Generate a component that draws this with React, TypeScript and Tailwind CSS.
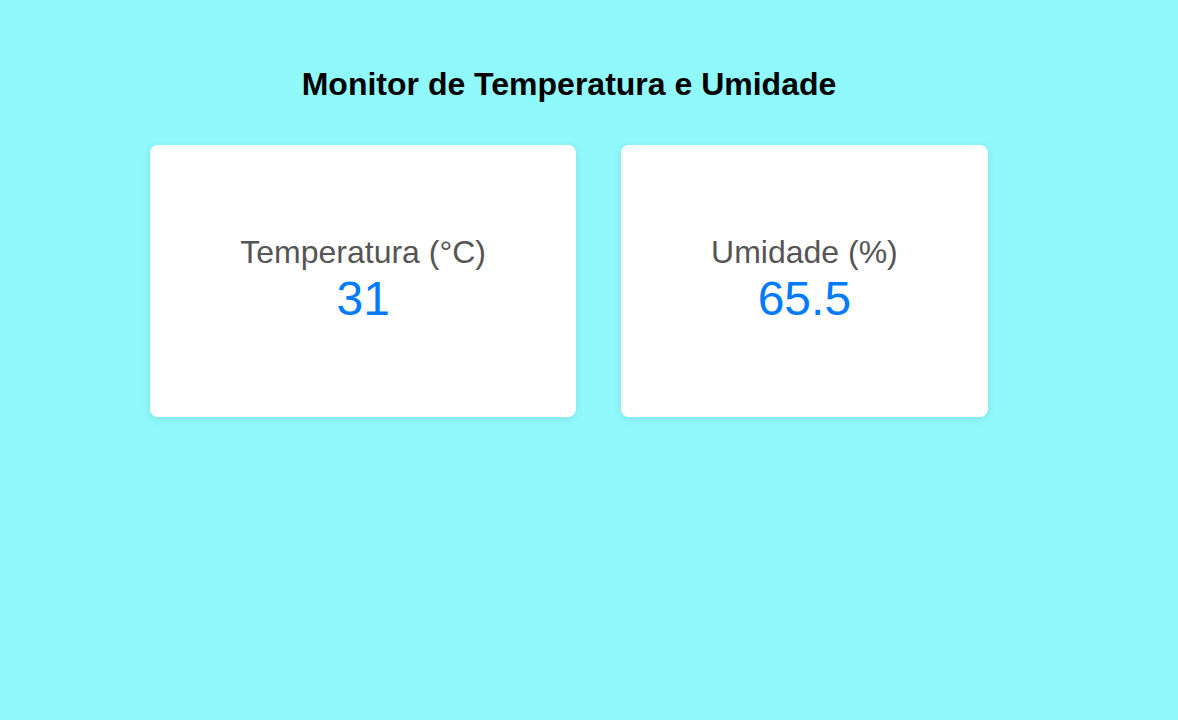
const Card = ({ label, value }: { label: string; value: string }) => {
  return (
    <div className="bg-white rounded-lg shadow-[0_2px_8px_rgba(0,0,0,0.1)] px-[90px] pt-[89px] pb-[91px] text-center">
      <p className="text-[32px] leading-[normal] text-[#555555]">{label}</p>
      <p className="text-[48px] leading-[normal] text-[#007bff]">{value}</p>
    </div>
  )
}

const App = () => {
  return (
    <div className="min-h-screen w-full bg-[#90f9fc] font-['Liberation_Sans',Arial,sans-serif]">
      <div className="w-[1138px] flex flex-col items-center pt-[66px]">
        <h1 className="text-[32px] font-bold leading-[normal] text-black">Monitor de Temperatura e Umidade</h1>
        <div className="flex gap-[45px] mt-[42px]">
          <Card label="Temperatura (°C)" value="31" />
          <Card label="Umidade (%)" value="65.5" />
        </div>
      </div>
    </div>
  )
}

export default App
